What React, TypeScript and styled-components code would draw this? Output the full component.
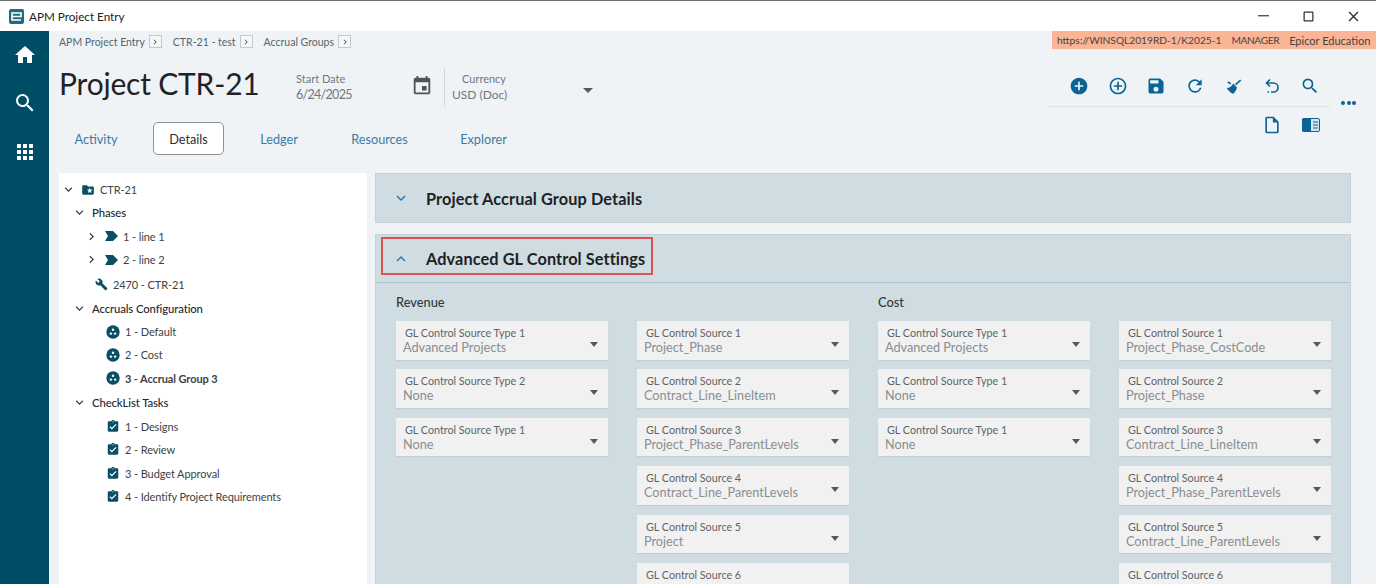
import React from 'react';
import styled, { createGlobalStyle } from 'styled-components';
import {
  MdHome, MdSearch, MdAddCircle, MdAddCircleOutline, MdSave, MdRefresh,
  MdOutlineInsertDriveFile, MdBuild, MdAssignmentTurnedIn, MdFolderSpecial,
  MdClose, MdCropSquare, MdKeyboardArrowDown, MdKeyboardArrowUp, MdKeyboardArrowRight,
  MdChevronRight, MdEvent,
} from 'react-icons/md';

const FONT = '"Lato", "Noto Sans", "Liberation Sans", sans-serif';
const TEAL = '#004d66';
const BLUE = '#0a6496';
const LINK = '#3b7ba3';

const Global = createGlobalStyle`
  html, body { margin: 0; padding: 0; height: 100%; overflow: hidden; background: #eff3f6; }
  #root { height: 584px; }
  * { box-sizing: border-box; }
  body { font-family: ${FONT}; }
`;

const Page = styled.div`
  width: 1376px; height: 584px; overflow: hidden; display: flex; flex-direction: column;
  border-top: 1px solid #6d7072;
`;
const TitleBar = styled.div`
  height: 30px; flex: none; background: #fff; display: flex; align-items: center; padding-left: 9px;
  font-size: 11.7px; color: #222;
`;
const Logo = styled.div`
  width: 15px; height: 15px; background: #1f6b80; border-radius: 2px; margin-right: 5px;
  display: flex; align-items: center; justify-content: center;
`;
const WinButtons = styled.div`
  margin-left: auto; display: flex; align-items: center; color: #333;
`;
const WinButton = styled.div`
  width: 45px; height: 30px; display: flex; align-items: center; justify-content: center;
`;
const Body = styled.div`
  flex: 1; display: flex; min-height: 0;
`;
const Rail = styled.div`
  width: 49px; flex: none; background: ${TEAL}; display: flex; flex-direction: column; align-items: center;
  padding-top: 12px; gap: 24px; color: #fff;
`;
const RailGrid = styled.span`
  display: flex; margin-top: 4px;
`;
const Main = styled.div`
  flex: 1; min-width: 0; display: flex; flex-direction: column; background: #eff3f6;
`;
const TopStrip = styled.div`
  height: 18px; flex: none; display: flex; align-items: flex-start; justify-content: space-between;
`;
const Crumbs = styled.div`
  display: flex; align-items: center; padding: 4px 0 0 10px; font-size: 10.5px; color: #56646e;
`;
const Crumb = styled.span`
  margin-right: 11px; display: flex; align-items: center; gap: 4px;
`;
const CrumbBox = styled.span`
  width: 13px; height: 13px; border: 1px solid #c3c9ce; background: #f4f6f8; display: inline-flex;
  align-items: center; justify-content: center; color: #555;
`;
const Env = styled.div`
  height: 18px; width: 324px; background: #f9b596; color: #444; font-size: 10.2px;
  display: flex; align-items: center; gap: 10px; padding: 0 5px; white-space: pre;
`;
const EnvUser = styled.span`
  letter-spacing: -0.4px;
`;
const EnvOrg = styled.span`
  font-size: 11px;
`;
const Header = styled.div`
  height: 69px; flex: none; display: flex; position: relative;
`;
const Title = styled.h1`
  margin: 0; padding: 12px 0 0 10px; width: 246px; font-weight: 400; font-size: 30px; line-height: 44px; color: #1f2326;
  letter-spacing: -0.2px; white-space: nowrap;
`;
const DateBlock = styled.div`
  width: 116px; padding-top: 23px; padding-left: 1px; color: #6f7780; font-size: 11px; line-height: 14px;
`;
const BigVal = styled.div`
  font-size: 12px; line-height: 17px;
`;
const DateVal = styled(BigVal)`
  font-size: 12.5px; letter-spacing: -0.7px;
`;
const CalBox = styled.div`
  width: 33px; padding-top: 26px; color: #4f5458; display: flex; justify-content: flex-start;
`;
const CurrencyBlock = styled.div`
  margin-top: 19px; height: 39px; width: 153px; border-left: 1px solid #d3d7da; padding: 4px 0 0 7px; position: relative;
  color: #6f7780; font-size: 11px; line-height: 14px;
`;
const CurrencyLabel = styled.div`
  padding-left: 10px;
`;
const CurrencyCaret = styled.span`
  position: absolute; right: 4px; top: 20px; width: 0; height: 0;
  border-left: 5px solid transparent; border-right: 5px solid transparent; border-top: 5px solid #55595d;
`;
const ToolArea = styled.div`
  margin-left: auto; width: 310px; margin-right: 19px; padding-top: 27px;
  display: flex; flex-direction: column; align-items: flex-start; position: relative;
`;
const ToolRow = styled.div`
  display: flex; width: 283px; height: 31px; flex: none; padding-left: 22px; gap: 18.5px; color: ${BLUE};
  border-bottom: 1px solid #dde1e4; align-items: flex-start;
`;
const ToolIcon = styled.span`
  width: 20px; height: 20px; display: flex; align-items: center; justify-content: center;
`;
const More = styled.span`
  position: absolute; right: 1px; top: 52px; display: flex; gap: 1.5px;
`;
const Dot = styled.i`
  width: 4px; height: 4px; border-radius: 50%; background: ${BLUE}; display: block;
`;
const ViewRow = styled.div`
  display: flex; gap: 18.5px; margin-left: 215px; padding-top: 8px; color: ${BLUE};
`;
const Tabs = styled.div`
  height: 55px; flex: none; display: flex; align-items: flex-start; padding-left: 10px;
`;
const Tab = styled.div<{ $active?: boolean; $w: number; $after?: number }>`
  width: ${p => p.$w}px; height: 33px; margin-top: 4px; margin-right: ${p => p.$after ?? 0}px;
  display: flex; align-items: center; justify-content: center;
  font-size: 12.7px; color: ${p => (p.$active ? '#2b2f33' : LINK)};
  ${p => (p.$active ? 'background:#fff;border:1px solid #8b9196;border-radius:5px;' : '')}
`;
const Content = styled.div`
  flex: 1; min-height: 0; display: flex; padding-left: 10px; gap: 8px; align-items: stretch;
`;
const TreePanel = styled.div`
  width: 308px; flex: none; background: #fff; padding-top: 5px; color: #3c4347; font-size: 11px;
`;
const Row = styled.div<{ $indent: number; $h?: number; $bold?: boolean }>`
  height: ${p => p.$h ?? 23.3}px; display: flex; align-items: center; padding-left: ${p => p.$indent}px; gap: 5px;
  font-weight: ${p => (p.$bold ? 700 : 400)}; white-space: nowrap; letter-spacing: -0.1px;
`;
const GroupLabel = styled.span`
  color: #23282b; font-size: 11.3px; font-weight: 500;
`;
const Arrow = styled.span`
  width: 16px; height: 16px; display: flex; align-items: center; justify-content: center; color: #3b4246; flex: none;
`;
const NodeIcon = styled.span`
  width: 14px; height: 14px; display: flex; align-items: center; justify-content: center; color: #0b4f66; flex: none;
`;
const Panels = styled.div`
  width: 976px; flex: none; display: flex; flex-direction: column;
`;
const Section = styled.div`
  background: #cfdde2; border: 1px solid #c5d3d9; margin-bottom: 11px;
`;
const SectionOpen = styled(Section)`
  flex: 1; margin-bottom: 0; border-bottom: none;
`;
const SectionHead = styled.div<{ $open?: boolean }>`
  height: 48px; display: flex; align-items: center; padding-left: 5px; position: relative;
  ${p => (p.$open ? 'border-bottom: 1px solid #a9c6d2;' : '')}
`;
const Chev = styled.span`
  width: 40px; margin-right: 5px; display: flex; justify-content: center; color: #2a7ba8;
`;
const SectionTitle = styled.span`
  font-size: 16.3px; font-weight: 700; color: #1e2225; letter-spacing: 0.1px;
`;
const Highlight = styled.span`
  position: absolute; left: 5px; top: 2px; width: 272px; height: 38px; border: 2px solid #d9534f;
`;
const SectionBody = styled.div`
  padding: 8px 20px 0;
`;
const ColumnHeads = styled.div`
  display: grid; grid-template-columns: 482px 1fr; font-size: 12.8px; line-height: 22px; color: #33393d; height: 30px;
  align-items: start; font-weight: 500;
`;
const Columns = styled.div`
  display: grid; grid-template-columns: repeat(4, 212px); column-gap: 29px;
`;
const Column = styled.div`
  display: flex; flex-direction: column; gap: 9.9px;
`;
const Field = styled.div`
  height: 38.5px; flex: none; background: #f1f1f1; position: relative; padding: 5px 0 0 7px; overflow: hidden;
  box-shadow: 0 1px 1px rgba(0, 0, 0, 0.06);
`;
const FieldLabel = styled.div`
  font-size: 10.75px; line-height: 14px; color: #5d6468; padding-left: 2px; white-space: nowrap;
`;
const FieldValue = styled.div`
  font-size: 12.7px; line-height: 14px; color: #8a8e91; white-space: nowrap;
`;
const Caret = styled.span`
  position: absolute; right: 10px; top: 21px; width: 0; height: 0;
  border-left: 4.5px solid transparent; border-right: 4.5px solid transparent; border-top: 5px solid #55595d;
`;

const GridIcon = () => (
  <svg width="18" height="18" viewBox="0 0 18 18" fill="#fff">
    {[1, 7, 13].flatMap(y => [1, 7, 13].map(x => <rect key={`${x}-${y}`} x={x} y={y} width="4" height="4" />))}
  </svg>
);
const PhaseIcon = () => (
  <svg width="13" height="10" viewBox="0 0 13 10"><path d="M0 0h8l5 5-5 5H0l3-5z" fill="#0b4f66" /></svg>
);
const AccrualIcon = () => (
  <svg width="14" height="14" viewBox="0 0 14 14">
    <circle cx="7" cy="7" r="6.7" fill="#0b4f66" />
    <circle cx="7" cy="4.8" r="1.2" fill="#fff" />
    <circle cx="4.9" cy="8.6" r="1.2" fill="#fff" />
    <circle cx="9.1" cy="8.6" r="1.2" fill="#fff" />
  </svg>
);
const BroomIcon = () => (
  <svg width="18" height="18" viewBox="0 0 18 18" fill={BLUE}>
    <path d="M16.2 2.4l1.1 1.3-5.2 4.5-1.1-1.3z" />
    <path d="M9.3 6.4l3.7 4.2c-.6 2.6-2 4.8-3.7 6.1-1.2-.2-3-1.2-4.3-2.7L2.7 11.3c2.4-.4 4.9-2 6.6-4.9z" />
    <path d="M4.3 4.2l3.1 2-1 1.3-3.1-2z" />
  </svg>
);
const UndoIcon = () => (
  <svg width="18" height="18" viewBox="0 0 18 18" fill="none" stroke={BLUE} strokeWidth="1.7">
    <path d="M7 2.5L3.5 6 7 9.5" />
    <path d="M4 6h6.5a4.5 4.5 0 0 1 0 9H8" />
    <path d="M4.5 15h1.5" />
  </svg>
);
const PanelIcon = () => (
  <svg width="18" height="14" viewBox="0 0 18 14">
    <rect x="0.5" y="0.5" width="17" height="13" rx="1.5" fill="#d7e5ee" stroke={BLUE} />
    <path d="M2 0h7v14H2a2 2 0 0 1-2-2V2a2 2 0 0 1 2-2z" fill={BLUE} />
    <path d="M11 4h5M11 7h5M11 10h5" stroke={BLUE} strokeWidth="1.2" />
  </svg>
);

const revenueA = [
  ['GL Control Source Type 1', 'Advanced Projects'],
  ['GL Control Source Type 2', 'None'],
  ['GL Control Source Type 1', 'None'],
];
const revenueB = [
  ['GL Control Source 1', 'Project_Phase'],
  ['GL Control Source 2', 'Contract_Line_LineItem'],
  ['GL Control Source 3', 'Project_Phase_ParentLevels'],
  ['GL Control Source 4', 'Contract_Line_ParentLevels'],
  ['GL Control Source 5', 'Project'],
  ['GL Control Source 6', ''],
];
const costA = [
  ['GL Control Source Type 1', 'Advanced Projects'],
  ['GL Control Source Type 1', 'None'],
  ['GL Control Source Type 1', 'None'],
];
const costB = [
  ['GL Control Source 1', 'Project_Phase_CostCode'],
  ['GL Control Source 2', 'Project_Phase'],
  ['GL Control Source 3', 'Contract_Line_LineItem'],
  ['GL Control Source 4', 'Project_Phase_ParentLevels'],
  ['GL Control Source 5', 'Contract_Line_ParentLevels'],
  ['GL Control Source 6', ''],
];

const FieldColumn = ({ items }: { items: string[][] }) => (
  <Column>
    {items.map(([l, v], i) => (
      <Field key={i}>
        <FieldLabel>{l}</FieldLabel>
        <FieldValue>{v}</FieldValue>
        <Caret />
      </Field>
    ))}
  </Column>
);

export default function App() {
  return (
    <Page>
      <Global />
      <TitleBar>
        <Logo>
          <svg width="11" height="9" viewBox="0 0 11 9" fill="none" stroke="#fff" strokeWidth="1.6">
            <path d="M1 4.5h9V1H1v7h9" />
          </svg>
        </Logo>
        APM Project Entry
        <WinButtons>
          <WinButton><svg width="11" height="2"><rect width="11" height="1.4" fill="#555" /></svg></WinButton>
          <WinButton><MdCropSquare size={15} /></WinButton>
          <WinButton><MdClose size={17} /></WinButton>
        </WinButtons>
      </TitleBar>
      <Body>
        <Rail>
          <MdHome size={24} />
          <MdSearch size={24} />
          <RailGrid><GridIcon /></RailGrid>
        </Rail>
        <Main>
          <TopStrip>
            <Crumbs>
              {['APM Project Entry', 'CTR-21 - test', 'Accrual Groups'].map(c => (
                <Crumb key={c}>{c}<CrumbBox><MdKeyboardArrowRight size={10} /></CrumbBox></Crumb>
              ))}
            </Crumbs>
            <Env><span>https://WINSQL2019RD-1/K2025-1</span><EnvUser>MANAGER</EnvUser><EnvOrg>Epicor Education</EnvOrg></Env>
          </TopStrip>
          <Header>
            <Title>Project CTR-21</Title>
            <DateBlock>Start Date<DateVal>6/24/2025</DateVal></DateBlock>
            <CalBox><MdEvent size={22} /></CalBox>
            <CurrencyBlock>
              <CurrencyLabel>Currency</CurrencyLabel>
              <BigVal>USD (Doc)</BigVal>
              <CurrencyCaret />
            </CurrencyBlock>
            <ToolArea>
              <ToolRow>
                <ToolIcon><MdAddCircle size={20} /></ToolIcon>
                <ToolIcon><MdAddCircleOutline size={20} /></ToolIcon>
                <ToolIcon><MdSave size={20} /></ToolIcon>
                <ToolIcon><MdRefresh size={20} /></ToolIcon>
                <ToolIcon><BroomIcon /></ToolIcon>
                <ToolIcon><UndoIcon /></ToolIcon>
                <ToolIcon><MdSearch size={20} /></ToolIcon>
              </ToolRow>
              <More><Dot /><Dot /><Dot /></More>
              <ViewRow>
                <ToolIcon><MdOutlineInsertDriveFile size={20} /></ToolIcon>
                <ToolIcon><PanelIcon /></ToolIcon>
              </ViewRow>
            </ToolArea>
          </Header>
          <Tabs>
            <Tab $w={74} $after={20}>Activity</Tab>
            <Tab $w={71} $active>Details</Tab>
            <Tab $w={110}>Ledger</Tab>
            <Tab $w={91}>Resources</Tab>
            <Tab $w={117}>Explorer</Tab>
          </Tabs>
          <Content>
            <TreePanel>
              <Row $indent={1}><Arrow><MdKeyboardArrowDown size={15} /></Arrow><NodeIcon><MdFolderSpecial size={16} /></NodeIcon>CTR-21</Row>
              <Row $indent={12}><Arrow><MdKeyboardArrowDown size={15} /></Arrow><GroupLabel>Phases</GroupLabel></Row>
              <Row $indent={24}><Arrow><MdChevronRight size={15} /></Arrow><NodeIcon><PhaseIcon /></NodeIcon>1 - line 1</Row>
              <Row $indent={24}><Arrow><MdChevronRight size={15} /></Arrow><NodeIcon><PhaseIcon /></NodeIcon>2 - line 2</Row>
              <Row $indent={35} $h={26}><NodeIcon><MdBuild size={13} /></NodeIcon>2470 - CTR-21</Row>
              <Row $indent={12}><Arrow><MdKeyboardArrowDown size={15} /></Arrow><GroupLabel>Accruals Configuration</GroupLabel></Row>
              <Row $indent={47} $h={22.8}><NodeIcon><AccrualIcon /></NodeIcon>1 - Default</Row>
              <Row $indent={47}><NodeIcon><AccrualIcon /></NodeIcon>2 - Cost</Row>
              <Row $indent={47} $bold><NodeIcon><AccrualIcon /></NodeIcon>3 - Accrual Group 3</Row>
              <Row $indent={12} $h={25}><Arrow><MdKeyboardArrowDown size={15} /></Arrow><GroupLabel>CheckList Tasks</GroupLabel></Row>
              <Row $indent={47}><NodeIcon><MdAssignmentTurnedIn size={17} /></NodeIcon>1 - Designs</Row>
              <Row $indent={47}><NodeIcon><MdAssignmentTurnedIn size={17} /></NodeIcon>2 - Review</Row>
              <Row $indent={47}><NodeIcon><MdAssignmentTurnedIn size={17} /></NodeIcon>3 - Budget Approval</Row>
              <Row $indent={47}><NodeIcon><MdAssignmentTurnedIn size={17} /></NodeIcon>4 - Identify Project Requirements</Row>
            </TreePanel>
            <Panels>
              <Section>
                <SectionHead>
                  <Chev><MdKeyboardArrowDown size={18} /></Chev>
                  <SectionTitle>Project Accrual Group Details</SectionTitle>
                </SectionHead>
              </Section>
              <SectionOpen>
                <SectionHead $open>
                  <Chev><MdKeyboardArrowUp size={18} /></Chev>
                  <SectionTitle>Advanced GL Control Settings</SectionTitle>
                  <Highlight />
                </SectionHead>
                <SectionBody>
                  <ColumnHeads><span>Revenue</span><span>Cost</span></ColumnHeads>
                  <Columns>
                    <FieldColumn items={revenueA} />
                    <FieldColumn items={revenueB} />
                    <FieldColumn items={costA} />
                    <FieldColumn items={costB} />
                  </Columns>
                </SectionBody>
              </SectionOpen>
            </Panels>
          </Content>
        </Main>
      </Body>
    </Page>
  );
}
